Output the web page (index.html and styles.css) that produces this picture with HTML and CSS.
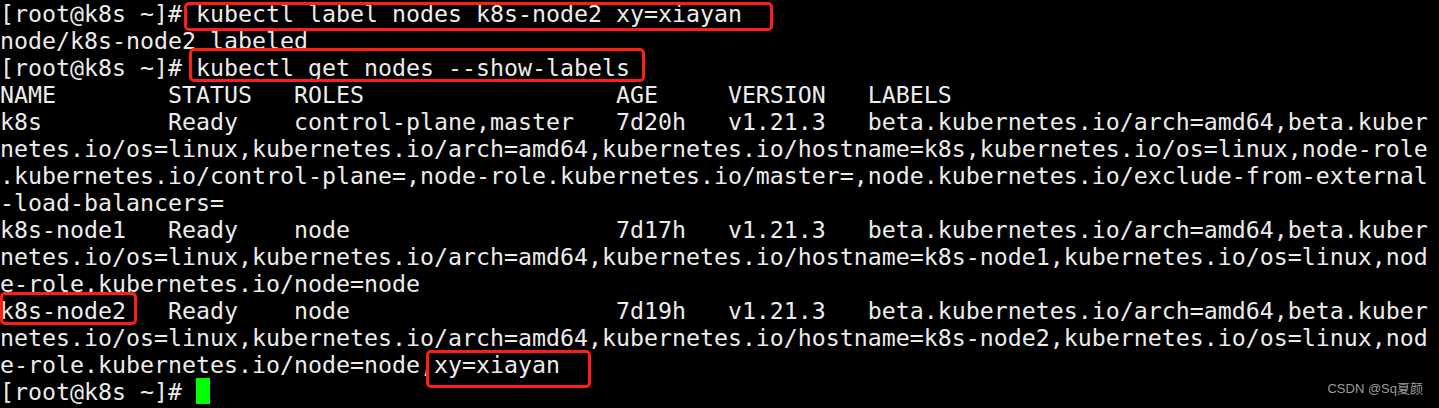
FILE: index.html
```html
<!DOCTYPE html>
<html lang="zh-CN">
<head>
<meta charset="utf-8">
<title>terminal</title>
<link rel="stylesheet" href="styles.css">
</head>
<body>
<div class="term">
<div class="line">[root@k8s ~]# kubectl label nodes k8s-node2 xy=xiayan</div>
<div class="line">node/k8s-node2 labeled</div>
<div class="line">[root@k8s ~]# kubectl get nodes --show-labels</div>
<div class="line">NAME        STATUS   ROLES                  AGE     VERSION   LABELS</div>
<div class="line">k8s         Ready    control-plane,master   7d20h   v1.21.3   beta.kubernetes.io/arch=amd64,beta.kuber</div>
<div class="line">netes.io/os=linux,kubernetes.io/arch=amd64,kubernetes.io/hostname=k8s,kubernetes.io/os=linux,node-role</div>
<div class="line">.kubernetes.io/control-plane=,node-role.kubernetes.io/master=,node.kubernetes.io/exclude-from-external</div>
<div class="line">-load-balancers=</div>
<div class="line">k8s-node1   Ready    node                   7d17h   v1.21.3   beta.kubernetes.io/arch=amd64,beta.kuber</div>
<div class="line">netes.io/os=linux,kubernetes.io/arch=amd64,kubernetes.io/hostname=k8s-node1,kubernetes.io/os=linux,nod</div>
<div class="line">e-role.kubernetes.io/node=node</div>
<div class="line">k8s-node2   Ready    node                   7d19h   v1.21.3   beta.kubernetes.io/arch=amd64,beta.kuber</div>
<div class="line">netes.io/os=linux,kubernetes.io/arch=amd64,kubernetes.io/hostname=k8s-node2,kubernetes.io/os=linux,nod</div>
<div class="line">e-role.kubernetes.io/node=node,xy=xiayan</div>
<div class="line">[root@k8s ~]# <span class="cursor"> </span></div>

<div class="mark mark-1"></div>
<div class="mark mark-2"></div>
<div class="mark mark-3"></div>
<div class="mark mark-4"></div>

<div class="watermark">CSDN @Sq夏颜</div>
</div>
</body>
</html>
```

FILE: styles.css
```css
html, body {
  margin: 0;
  padding: 0;
  background: #000;
}

body {
  width: 1439px;
  height: 408px;
  overflow: hidden;
}

.term {
  position: relative;
  width: 1439px;
  height: 408px;
  background: #000;
  color: #ececec;
  font-family: "DejaVu Sans Mono", "Liberation Mono", monospace;
  font-size: 23.25px;
  line-height: 27px;
}

.line {
  white-space: pre;
  height: 27px;
}

.cursor {
  display: inline-block;
  width: 14px;
  height: 26px;
  background: #00ff00;
  vertical-align: top;
}

.mark {
  position: absolute;
  border: 3px solid #ff1e12;
  border-radius: 5px;
  box-sizing: border-box;
}

.mark-1 { left: 184px; top: 2px;   width: 589px; height: 29px; }
.mark-2 { left: 189px; top: 48px;  width: 456px; height: 34px; }
.mark-3 { left: 0;     top: 292px; width: 137px; height: 33px; }
.mark-4 { left: 426px; top: 350px; width: 165px; height: 38px; }

.watermark {
  position: absolute;
  right: 16px;
  top: 381px;
  font-family: "Liberation Sans", "Noto Sans CJK SC", sans-serif;
  font-size: 13px;
  line-height: 16px;
  color: #9c9c9c;
}
```
